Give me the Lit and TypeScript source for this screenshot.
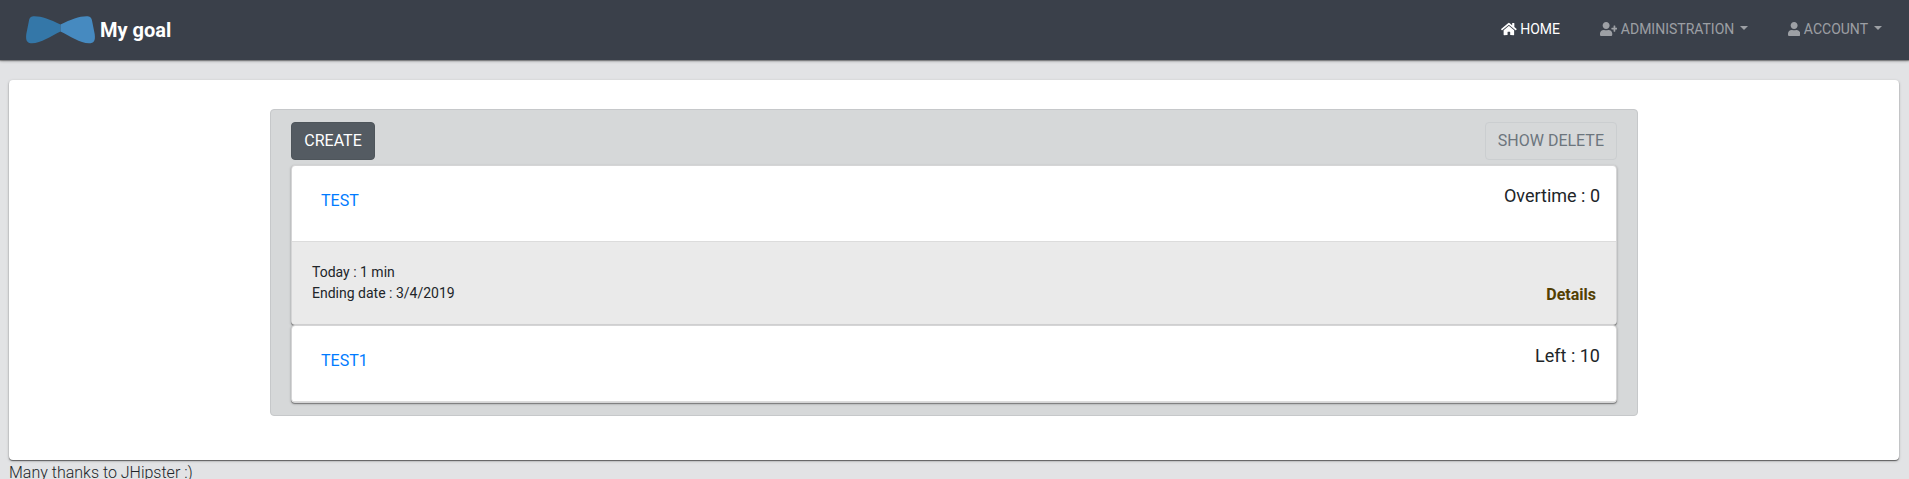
import { LitElement, html, css, svg } from "lit";
import { customElement, property } from "lit/decorators.js";

const USER =
  "M224 256c70.7 0 128-57.3 128-128S294.7 0 224 0 96 57.3 96 128s57.3 128 128 128zm89.6 32h-16.7c-22.2 10.2-46.9 16-72.9 16s-50.6-5.8-72.9-16h-16.7C60.2 288 0 348.2 0 422.4V464c0 26.5 21.5 48 48 48h352c26.5 0 48-21.5 48-48v-41.6c0-74.2-60.2-134.4-134.4-134.4z";
const ICONS: Record<string, { w: number; d: string }> = {
  home: {
    w: 576,
    d: "M280.37 148.26L96 300.11V464a16 16 0 0 0 16 16l112.06-.29a16 16 0 0 0 15.92-16V368a16 16 0 0 1 16-16h64a16 16 0 0 1 16 16v95.64a16 16 0 0 0 16 16.05L464 480a16 16 0 0 0 16-16V300L295.67 148.26a12.19 12.19 0 0 0-15.3 0zM571.6 251.47L488 182.56V44.05a12 12 0 0 0-12-12h-56a12 12 0 0 0-12 12v72.61L318.47 43a48 48 0 0 0-61 0L4.34 251.47a12 12 0 0 0-1.6 16.9l25.5 31A12 12 0 0 0 45.15 301l235.22-193.74a12.19 12.19 0 0 1 15.3 0L530.9 301a12 12 0 0 0 16.9-1.6l25.5-31a12 12 0 0 0-1.7-16.93z",
  },
  user: { w: 448, d: USER },
  "user-plus": {
    w: 640,
    d:
      "M624 208h-64v-64c0-8.8-7.2-16-16-16h-32c-8.8 0-16 7.2-16 16v64h-64c-8.8 0-16 7.2-16 16v32c0 8.8 7.2 16 16 16h64v64c0 8.8 7.2 16 16 16h32c8.8 0 16-7.2 16-16v-64h64c8.8 0 16-7.2 16-16v-32c0-8.8-7.2-16-16-16z" +
      USER,
  },
};

@customElement("nav-item")
class NavItem extends LitElement {
  @property() icon = "home";
  @property() label = "";
  @property({ type: Boolean }) menu = false;

  static styles = css`
    :host { display: block; color: rgba(255, 255, 255, 0.5); }
    :host([active]) { color: #fff; }
    .link { display: flex; align-items: center; font-size: 14px; line-height: 21px; cursor: pointer; }
    .icon { display: block; height: 14px; fill: currentColor; }
    .label { padding-left: 3.5px; }
    .caret {
      margin: 0 0 2px 6px;
      border-top: 4.2px solid currentColor;
      border-left: 4.2px solid transparent;
      border-right: 4.2px solid transparent;
    }
  `;

  render() {
    const i = ICONS[this.icon];
    return html`<a class="link">
      <svg class="icon" viewBox="0 0 ${i.w} 512">${svg`<path d=${i.d}></path>`}</svg>
      <span class="label">${this.label}</span>
      ${this.menu ? html`<span class="caret"></span>` : ""}
    </a>`;
  }
}

@customElement("goal-card")
class GoalCard extends LitElement {
  @property() name = "";
  @property() status = "";
  @property({ attribute: false }) lines: string[] = [];

  static styles = css`
    :host {
      display: block;
      background: #fff;
      border: 1px solid #d5d5d6;
      border-radius: 4px;
      box-shadow: 0 1px 3px rgba(0, 0, 0, 0.2), 0 1px 1px rgba(0, 0, 0, 0.35);
    }
    .head {
      display: flex;
      justify-content: space-between;
      height: 75px;
      padding: 0 16px 0 29px;
      border-bottom: 1px solid #dcdcdc;
    }
    .name { padding-top: 23px; font-size: 16px; line-height: 24px; color: #007bff; }
    .status { padding-top: 16px; font-size: 18px; line-height: 27px; }
    .body {
      display: flex;
      justify-content: space-between;
      align-items: flex-end;
      height: 82px;
      box-sizing: border-box;
      padding: 0 20px 20px 20px;
      background: #eaeaea;
      border-radius: 0 0 3px 3px;
      font-size: 14px;
      line-height: 21px;
    }
    .details { font-size: 16px; line-height: 18px; font-weight: 700; color: #533f03; }
  `;

  render() {
    return html`
      <div class="head">
        <a class="name">${this.name}</a>
        <span class="status">${this.status}</span>
      </div>
      ${this.lines.length
        ? html`<div class="body">
            <div>${this.lines.map((l) => html`<div>${l}</div>`)}</div>
            <a class="details">Details</a>
          </div>`
        : ""}
    `;
  }
}

@customElement("app-root")
class AppRoot extends LitElement {
  static styles = css`
    :host {
      display: block;
      box-sizing: border-box;
      height: 479px;
      overflow: hidden;
      background: #e2e3e5;
      font-family: Roboto, "Liberation Sans", sans-serif;
      color: #212529;
    }
    .navbar {
      display: flex;
      align-items: center;
      justify-content: space-between;
      height: 60px;
      box-sizing: border-box;
      padding: 0 27px 0 26px;
      background: #3a404a;
      box-shadow: 0 1px 1px rgba(0, 0, 0, 0.3), 0 1px 3px rgba(0, 0, 0, 0.3);
    }
    .brand { display: flex; align-items: center; }
    .logo { display: block; width: 70px; height: 28px; }
    .title { padding-left: 4px; font-size: 20px; line-height: 30px; font-weight: 700; color: #fff; }
    .menu { display: flex; gap: 39.8px; padding-bottom: 2px; }
    .main {
      display: flex;
      flex-direction: column;
      align-items: center;
      box-sizing: border-box;
      height: 380px;
      margin: 20px 10px 0 9px;
      padding-top: 29px;
      background: #fff;
      border-radius: 4px;
      box-shadow: 0 1px 1px rgba(0, 0, 0, 0.5), 0 1px 3px rgba(0, 0, 0, 0.25);
    }
    .panel {
      box-sizing: border-box;
      width: 1368px;
      height: 307px;
      padding: 12px 20px;
      border: 1px solid #c6c8ca;
      border-radius: 4px;
      background: #d6d8d9;
    }
    .actions { display: flex; justify-content: space-between; margin-bottom: 5px; }
    .btn {
      box-sizing: border-box;
      height: 38px;
      min-width: 84px;
      padding: 6px 12px;
      border: 1px solid #4e555b;
      border-radius: 4px;
      background: #545b62;
      color: #fff;
      font: 400 16px/24px Roboto, sans-serif;
    }
    .muted { background: transparent; color: #6c757d; border-color: #cbced0; }
    .foot { padding: 1px 0 0 9px; font-size: 16px; line-height: 24px; font-weight: 300; }
  `;

  render() {
    return html`
      <nav class="navbar">
        <a class="brand">
          <svg class="logo" viewBox="0 0 70 28">
            <path fill="#3477a8" d="M34.500 8.500C24 3.500 16 .3 8.500 .3C5 .3 3.700 1.300 3 4.500L.3 18C-.6 25 1.200 27.300 6 27.300C15 27.300 25 20 34.500 15.500Z"></path>
            <path fill="#468ac0" d="M34.500 8.500C45 3.500 53 .3 60.500 .3C64 .3 65.300 1.300 66 4.500L68.700 18C69.600 25 67.800 27.300 63 27.300C54 27.300 44 20 34.500 15.500Z"></path>
          </svg>
          <span class="title">My goal</span>
        </a>
        <div class="menu">
          <nav-item icon="home" label="HOME" active></nav-item>
          <nav-item icon="user-plus" label="ADMINISTRATION" menu></nav-item>
          <nav-item icon="user" label="ACCOUNT" menu></nav-item>
        </div>
      </nav>
      <main class="main">
        <section class="panel">
          <div class="actions">
            <button class="btn">CREATE</button>
            <button class="btn muted">SHOW DELETE</button>
          </div>
          <goal-card name="TEST" status="Overtime : 0" .lines=${["Today : 1 min", "Ending date : 3/4/2019"]}></goal-card>
          <goal-card name="TEST1" status="Left : 10"></goal-card>
        </section>
      </main>
      <footer class="foot">Many thanks to JHipster :)</footer>
    `;
  }
}
